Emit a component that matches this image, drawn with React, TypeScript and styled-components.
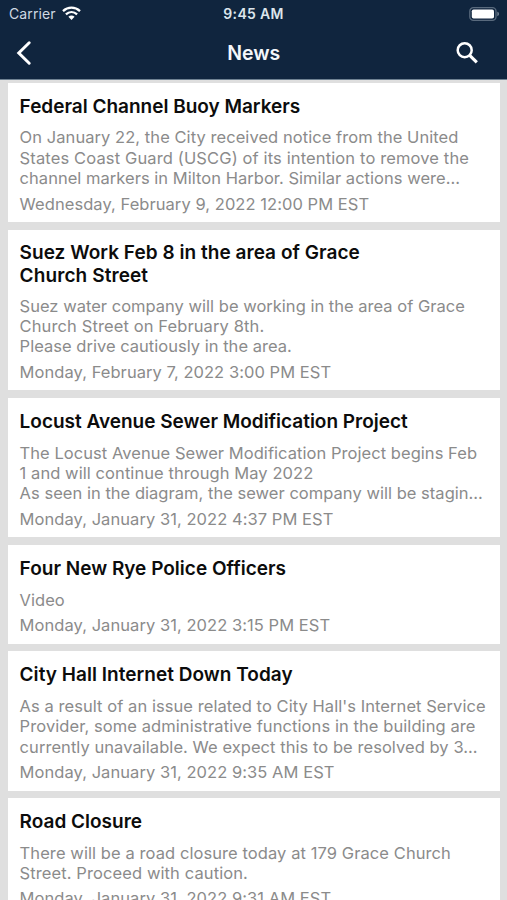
import React from "react";
import styled, { createGlobalStyle } from "styled-components";

const GlobalStyle = createGlobalStyle`
  * { box-sizing: border-box; }
  html, body { margin: 0; padding: 0; background: #dfdfdf; }
  body { font-family: Inter, "Liberation Sans", sans-serif; }
`;

const Screen = styled.div`
  width: 507px;
  height: 900px;
  overflow: hidden;
  display: flex;
  flex-direction: column;
  background: #dfdfdf;
`;

const Header = styled.header`
  flex: none;
  height: 80px;
  background: #10253e;
  border-bottom: 1px solid #6f8292;
  color: #f4f7fa;
`;

const StatusBar = styled.div`
  display: grid;
  grid-template-columns: 1fr auto 1fr;
  align-items: center;
  height: 27px;
  padding: 0 7px 0 9px;
  font-size: 14px;
  line-height: 17px;
`;

const Carrier = styled.div`
  display: flex;
  align-items: center;
  gap: 6px;
  color: #cfd9e3;
  letter-spacing: 0.1px;
`;

const Clock = styled.time`
  font-weight: 600;
  color: #dce5ec;
  letter-spacing: 0.3px;
  margin-right: 2px;
`;

const Battery = styled.svg`
  justify-self: end;
  display: block;
`;

const NavBar = styled.nav`
  display: grid;
  grid-template-columns: 1fr auto 1fr;
  align-items: center;
  height: 51px;
  padding: 0 28.5px 0 14px;
`;

const IconButton = styled.button<{ $end?: boolean }>`
  display: flex;
  padding: 0;
  border: 0;
  background: none;
  color: #fff;
  justify-self: ${({ $end }) => ($end ? "end" : "start")};
`;

const NavTitle = styled.h1`
  margin: 0 0 0 15px;
  font-size: 19.5px;
  line-height: 24px;
  font-weight: 600;
`;

const Feed = styled.main`
  display: flex;
  flex-direction: column;
  gap: 7.5px;
  padding: 2.9px 7.5px 0 8px;
`;

const Card = styled.article`
  flex: none;
  padding: 10.8px 11px 8.5px 11.6px;
  background: #fff;
`;

const CardTitle = styled.h2`
  display: flex;
  flex-direction: column;
  justify-content: center;
  min-height: 25px;
  margin: 0 0 8.8px;
  font-size: 19px;
  line-height: 23px;
  font-weight: 600;
  color: #0c0c0c;
`;

const Summary = styled.div`
  margin: 0 0 4.8px;
  font-size: 16.5px;
  line-height: 20.4px;
  color: #8b8b8b;
`;

const DateLine = styled.time`
  display: block;
  font-size: 16.5px;
  line-height: 20.4px;
  letter-spacing: 0.055px;
  color: #8b8b8b;
`;

const Line = styled.span<{ $tracking?: number }>`
  display: block;
  white-space: nowrap;
  letter-spacing: ${({ $tracking = 0.03 }) => $tracking}px;
`;

type TextLine = { text: string; tracking?: number };
type NewsItem = { title: TextLine[]; summary: TextLine[]; date: string };

const news: NewsItem[] = [
  {
    title: [{ text: "Federal Channel Buoy Markers", tracking: -0.01 }],
    summary: [
      { text: "On January 22, the City received notice from the United", tracking: 0.06 },
      { text: "States Coast Guard (USCG) of its intention to remove the", tracking: 0.13 },
      { text: "channel markers in Milton Harbor. Similar actions were…" },
    ],
    date: "Wednesday, February 9, 2022 12:00 PM EST",
  },
  {
    title: [
      { text: "Suez Work Feb 8 in the area of Grace", tracking: 0.04 },
      { text: "Church Street", tracking: 0.1 },
    ],
    summary: [
      { text: "Suez water company will be working in the area of Grace", tracking: 0.015 },
      { text: "Church Street on February 8th.", tracking: 0.11 },
      { text: "Please drive cautiously in the area.", tracking: 0.02 },
    ],
    date: "Monday, February 7, 2022 3:00 PM EST",
  },
  {
    title: [{ text: "Locust Avenue Sewer Modification Project", tracking: -0.01 }],
    summary: [
      { text: "The Locust Avenue Sewer Modification Project begins Feb", tracking: 0.05 },
      { text: "1 and will continue through May 2022", tracking: 0.07 },
      { text: "As seen in the diagram, the sewer company will be stagin…", tracking: 0.03 },
    ],
    date: "Monday, January 31, 2022 4:37 PM EST",
  },
  {
    title: [{ text: "Four New Rye Police Officers", tracking: 0.01 }],
    summary: [{ text: "Video" }],
    date: "Monday, January 31, 2022 3:15 PM EST",
  },
  {
    title: [{ text: "City Hall Internet Down Today", tracking: 0.03 }],
    summary: [
      { text: "As a result of an issue related to City Hall's Internet Service", tracking: 0.06 },
      { text: "Provider, some administrative functions in the building are", tracking: 0.08 },
      { text: "currently unavailable. We expect this to be resolved by 3…", tracking: 0.055 },
    ],
    date: "Monday, January 31, 2022 9:35 AM EST",
  },
  {
    title: [{ text: "Road Closure", tracking: 0 }],
    summary: [
      { text: "There will be a road closure today at 179 Grace Church", tracking: 0.08 },
      { text: "Street. Proceed with caution.", tracking: 0.1 },
    ],
    date: "Monday, January 31, 2022 9:31 AM EST",
  },
];

const WifiIcon = () => (
  <svg width="19" height="15" viewBox="0 0 19 15" fill="none" stroke="#fff" strokeWidth="2.3">
    <path d="M1 5.1C5.9.5 13.1.5 18 5.1" />
    <path d="M3.9 8.3C7.2 5.3 11.8 5.3 15.1 8.3" />
    <path d="M6.4 10.7C8.2 9 10.8 9 12.6 10.7L9.5 14Z" fill="#fff" stroke="none" />
  </svg>
);

const BatteryIcon = () => (
  <Battery width="31" height="14" viewBox="0 0 31 14">
    <rect x="0.8" y="0.7" width="26.2" height="12.6" rx="3.6" fill="none" stroke="#596a7d" strokeWidth="1.3" />
    <rect x="2.8" y="2.5" width="22.2" height="9" rx="1.8" fill="#fff" />
    <path d="M28.3 4.8C30.6 5.4 30.6 8.6 28.3 9.2Z" fill="#718091" />
  </Battery>
);

const BackIcon = () => (
  <svg width="20" height="26" viewBox="0 0 20 26" fill="none" stroke="currentColor" strokeWidth="3" strokeLinecap="round">
    <path d="M15.2 2.8L4.8 13L15.2 23.2" />
  </svg>
);

const SearchIcon = () => (
  <svg width="24" height="24" viewBox="0 0 24 24" fill="none" stroke="currentColor">
    <circle cx="9.7" cy="9.2" r="7" strokeWidth="2.5" />
    <path d="M14.7 14.3L21.8 21.4" strokeWidth="3.1" />
  </svg>
);

const renderLines = (lines: TextLine[]) =>
  lines.map((line) => (
    <Line key={line.text} $tracking={line.tracking}>
      {line.text}
    </Line>
  ));

export default function App() {
  return (
    <Screen>
      <GlobalStyle />
      <Header>
        <StatusBar>
          <Carrier>
            Carrier
            <WifiIcon />
          </Carrier>
          <Clock>9:45 AM</Clock>
          <BatteryIcon />
        </StatusBar>
        <NavBar>
          <IconButton aria-label="Back">
            <BackIcon />
          </IconButton>
          <NavTitle>News</NavTitle>
          <IconButton $end aria-label="Search">
            <SearchIcon />
          </IconButton>
        </NavBar>
      </Header>
      <Feed>
        {news.map((item) => (
          <Card key={item.date}>
            <CardTitle>{renderLines(item.title)}</CardTitle>
            <Summary>{renderLines(item.summary)}</Summary>
            <DateLine>{item.date}</DateLine>
          </Card>
        ))}
      </Feed>
    </Screen>
  );
}
